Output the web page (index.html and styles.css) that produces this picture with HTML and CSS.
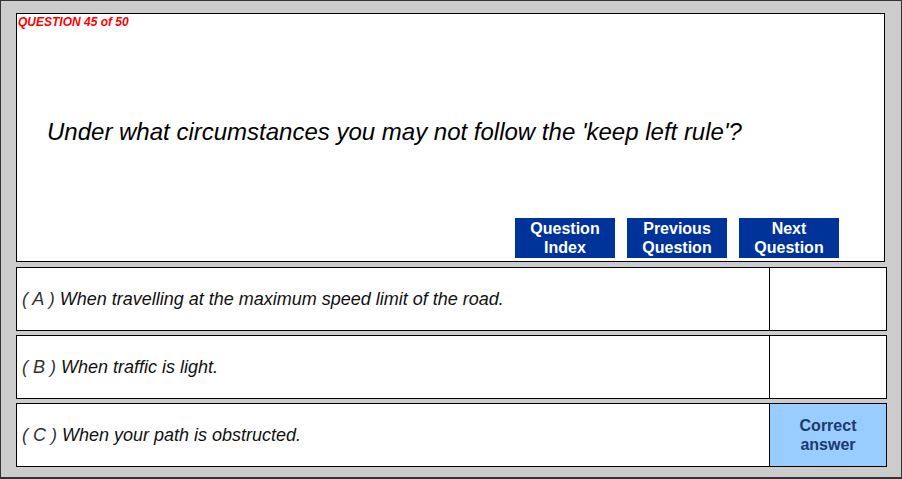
FILE: index.html
```html
<!DOCTYPE html>
<html lang="en">
<head>
    <meta charset="UTF-8">
    <title>Question 45 of 50</title>
    <link rel="stylesheet" href="styles.css">
</head>
<body>
    <div class="frame">
        <div class="question-box">
            <div class="counter">QUESTION 45 of 50</div>
            <p class="question">Under what circumstances you may not follow the 'keep left rule'?</p>
            <div class="nav">
                <button class="nav-btn">Question<br>Index</button>
                <button class="nav-btn">Previous<br>Question</button>
                <button class="nav-btn">Next<br>Question</button>
            </div>
        </div>
        <div class="option">
            <div class="option-text"><span><span class="letter">( A )</span> When travelling at the maximum speed limit of the road.</span></div>
            <div class="option-mark"></div>
        </div>
        <div class="option">
            <div class="option-text"><span><span class="letter">( B )</span> When traffic is light.</span></div>
            <div class="option-mark"></div>
        </div>
        <div class="option">
            <div class="option-text"><span><span class="letter">( C )</span> When your path is obstructed.</span></div>
            <div class="option-mark correct">Correct<br>answer</div>
        </div>
    </div>
</body>
</html>
```
FILE: styles.css
```css
body {
    margin: 0;
    font-family: "Liberation Sans", Arial, sans-serif;
}
.frame {
    box-sizing: border-box;
    width: 902px;
    height: 479px;
    background-color: #cccccc;
    border: 1px solid #333;
    border-bottom-width: 2px;
    padding: 12px 15px 0 15px;
}
.question-box {
    box-sizing: border-box;
    width: 869px;
    height: 249px;
    margin-bottom: 5px;
    background-color: #fff;
    border: 1px solid #000;
    display: flex;
    flex-direction: column;
    padding: 1px 0 3px 1px;
}
.counter {
    color: #ff0000;
    font-size: 12px;
    font-weight: bold;
    font-style: italic;
    line-height: 14px;
}
.question {
    font-size: 24px;
    font-style: italic;
    margin: 89px 0 0 29px;
    line-height: 28px;
}
.nav {
    margin-top: auto;
    display: flex;
    justify-content: flex-end;
    gap: 12px;
    padding-right: 45px;
}
.nav-btn {
    width: 100px;
    height: 40px;
    padding: 0;
    border: none;
    background-color: #003399;
    color: #fff;
    font-family: "Liberation Sans", Arial, sans-serif;
    font-size: 16px;
    font-weight: bold;
    line-height: 19px;
    cursor: pointer;
}
.option {
    box-sizing: border-box;
    width: 871px;
    height: 64px;
    margin-bottom: 4px;
    background-color: #fff;
    border: 1px solid #000;
    display: flex;
}
.option-text {
    flex: 1;
    display: flex;
    align-items: center;
    padding-left: 5px;
    font-size: 18px;
    font-style: italic;
    color: #111;
}
.letter {
    color: #333;
}
.option-mark {
    width: 116px;
    border-left: 1px solid #000;
}
.correct {
    background-color: #99ccff;
    color: #1d3a6e;
    font-size: 16px;
    font-weight: bold;
    line-height: 19px;
    text-align: center;
    display: flex;
    align-items: center;
    justify-content: center;
}
```
